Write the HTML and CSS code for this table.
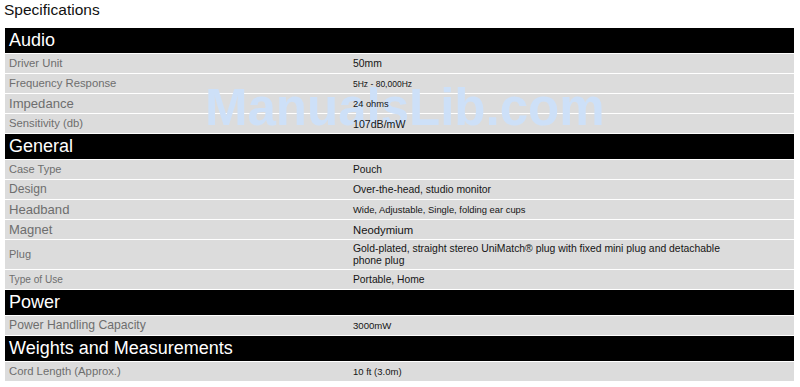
FILE: index.html
```html
<!DOCTYPE html>
<html lang="en">
<head>
    <meta charset="UTF-8">
    <meta name="viewport" content="width=device-width, initial-scale=1.0">
    <title>Specifications</title>
    <link rel="stylesheet" href="styles.css">
</head>
<body>
    <div class="sheet">
        <h1 class="title">Specifications</h1>
        <table class="specs">
            <colgroup>
                <col class="col-label">
                <col class="col-value">
            </colgroup>
            <tr class="group"><th colspan="2">Audio</th></tr>
            <tr>
                <td class="label s113">Driver Unit</td>
                <td class="value"><div class="val s104">50mm</div></td>
            </tr>
            <tr>
                <td class="label s113">Frequency Response</td>
                <td class="value"><div class="val s85">5Hz - 80,000Hz</div></td>
            </tr>
            <tr>
                <td class="label s131">Impedance</td>
                <td class="value"><div class="val s93">24 ohms</div></td>
            </tr>
            <tr>
                <td class="label s113">Sensitivity (db)</td>
                <td class="value"><div class="val s106">107dB/mW</div></td>
            </tr>
            <tr class="group"><th colspan="2">General</th></tr>
            <tr>
                <td class="label s110">Case Type</td>
                <td class="value"><div class="val s102">Pouch</div></td>
            </tr>
            <tr>
                <td class="label s121">Design</td>
                <td class="value"><div class="val s104">Over-the-head, studio monitor</div></td>
            </tr>
            <tr>
                <td class="label s131">Headband</td>
                <td class="value"><div class="val s94">Wide, Adjustable, Single, folding ear cups</div></td>
            </tr>
            <tr>
                <td class="label s130">Magnet</td>
                <td class="value"><div class="val s113">Neodymium</div></td>
            </tr>
            <tr class="tall">
                <td class="label s110">Plug</td>
                <td class="value"><div class="val s104">Gold-plated, straight stereo UniMatch® plug with fixed mini plug and detachable phone plug</div></td>
            </tr>
            <tr>
                <td class="label s101">Type of Use</td>
                <td class="value"><div class="val s103">Portable, Home</div></td>
            </tr>
            <tr class="group"><th colspan="2">Power</th></tr>
            <tr>
                <td class="label s122">Power Handling Capacity</td>
                <td class="value"><div class="val s96">3000mW</div></td>
            </tr>
            <tr class="group"><th colspan="2">Weights and Measurements</th></tr>
            <tr>
                <td class="label s113">Cord Length (Approx.)</td>
                <td class="value"><div class="val s95">10 ft (3.0m)</div></td>
            </tr>
        </table>
        <div class="watermark">ManualsLib.com</div>
    </div>
</body>
</html>
```

FILE: styles.css
```css
body {
    margin: 0;
    background-color: #ffffff;
    font-family: "Liberation Sans", Arial, sans-serif;
}
.sheet {
    position: relative;
    padding: 0 6px 0 5px;
}
.title {
    margin: 0 0 0 -1px;
    padding-top: 1px;
    height: 26px;
    font-size: 15.5px;
    font-weight: normal;
    line-height: 18px;
    color: #111111;
}
.specs {
    width: 789px;
    table-layout: fixed;
    border-collapse: separate;
    border-spacing: 0 1px;
}
.col-label {
    width: 343px;
}
.specs th {
    background-color: #000000;
    color: #ffffff;
    font-weight: normal;
    font-size: 18px;
    text-align: left;
    height: 25px;
    padding: 0 4px;
    line-height: 25px;
}
.specs td {
    background-color: #dcdcdc;
    height: 19px;
    padding: 0 4px;
    line-height: 15px;
    vertical-align: middle;
}
.specs .tall td {
    height: 29px;
}
.label {
    color: #6e6e6e;
}
.value {
    color: #151515;
}
.val {
    position: relative;
    z-index: 2;
    max-width: 375px;
    line-height: 12px;
    padding-left: 1px;
}

/* font sizes vary row by row */
.s85 { font-size: 8.5px; }
.s93 { font-size: 9.3px; }
.s94 { font-size: 9.4px; }
.s95 { font-size: 9.5px; }
.s96 { font-size: 9.6px; }
.s101 { font-size: 10.1px; }
.s102 { font-size: 10.2px; }
.s103 { font-size: 10.3px; }
.s104 { font-size: 10.4px; }
.s106 { font-size: 10.6px; }
.s110 { font-size: 11px; }
.s113 { font-size: 11.3px; }
.s121 { font-size: 12.1px; }
.s122 { font-size: 12.2px; }
.s130 { font-size: 13px; }
.s131 { font-size: 13.1px; }

.watermark {
    position: absolute;
    left: 205px;
    top: 82px;
    z-index: 1;
    font-size: 51px;
    font-weight: bold;
    line-height: 1;
    color: #cde0f8;
    pointer-events: none;
    white-space: nowrap;
}
```
